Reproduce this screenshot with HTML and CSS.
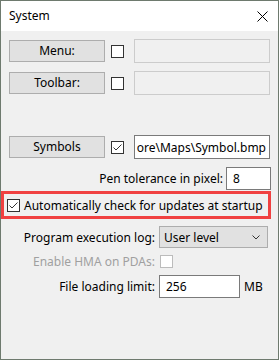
FILE: index.html
```html
<!DOCTYPE html>
<html>
<head>
<meta charset="utf-8">
<link rel="stylesheet" href="styles.css">
</head>
<body>
<div class="window">
  <div class="titlebar">
    <span class="title">System</span>
    <svg class="close" width="11" height="11" viewBox="0 0 11 11"><path d="M0.5 0.5 L10.5 10.5 M10.5 0.5 L0.5 10.5" stroke="#000" stroke-width="1"/></svg>
  </div>
  <div class="content">
    <div class="btnrow">
      <div class="btn">Menu:</div>
      <div class="cb"></div>
      <div class="field disabled"></div>
    </div>
    <div class="btnrow gap8">
      <div class="btn">Toolbar:</div>
      <div class="cb"></div>
      <div class="field disabled"></div>
    </div>
    <div class="btnrow gap40">
      <div class="btn">Symbols</div>
      <div class="cb"><svg width="11" height="11" viewBox="0 0 11 11"><path d="M1.5 5.5 L4 8 L9.5 2.5" fill="none" stroke="#333" stroke-width="1"/></svg></div>
      <div class="field path"><span>ore\Maps\Symbol.bmp</span></div>
    </div>
    <div class="penrow">
      <span class="lbl">Pen tolerance in pixel:</span>
      <div class="input pen">8</div>
    </div>
    <div class="redbox">
      <div class="cb"><svg width="11" height="11" viewBox="0 0 11 11"><path d="M1.5 5.5 L4 8 L9.5 2.5" fill="none" stroke="#333" stroke-width="1"/></svg></div>
      <span class="cbtext">Automatically check for updates at startup</span>
    </div>
    <div class="formrow prog">
      <span class="flabel">Program execution log:</span>
      <div class="select">
        <span>User level</span>
        <svg width="8" height="5" viewBox="0 0 8 5"><path d="M0.5 0.5 L4 4 L7.5 0.5" fill="none" stroke="#333" stroke-width="1"/></svg>
      </div>
    </div>
    <div class="formrow hma">
      <span class="flabel dis">Enable HMA on PDAs:</span>
      <div class="cb discb"></div>
    </div>
    <div class="formrow file">
      <span class="flabel">File loading limit:</span>
      <div class="input limit">256</div>
      <span class="unit">MB</span>
    </div>
  </div>
</div>
</body>
</html>
```
FILE: styles.css
```css
html, body {
  margin: 0;
  padding: 0;
}
body {
  font-family: "Noto Sans", "Liberation Sans", sans-serif;
  font-size: 12px;
  color: #000;
}
.window {
  width: 279px;
  height: 360px;
  box-sizing: border-box;
  border: 1px solid #6e7a6e;
  background: #f0f0f0;
  display: flex;
  flex-direction: column;
}
.titlebar {
  height: 30px;
  background: #fff;
  display: flex;
  align-items: center;
  justify-content: space-between;
  padding: 0 10px 0 8px;
}
.title {
  font-size: 12px;
  line-height: 16px;
}
.close {
  display: block;
}
.content {
  padding-top: 8px;
  display: flex;
  flex-direction: column;
}
.btnrow {
  display: flex;
  align-items: center;
  height: 24px;
  padding-left: 8px;
}
.gap8 { margin-top: 8px; }
.gap40 { margin-top: 40px; }
.btn {
  width: 96px;
  height: 22px;
  box-sizing: border-box;
  border: 1px solid #adadad;
  background: #e1e1e1;
  display: flex;
  align-items: center;
  justify-content: center;
  margin-right: 6px;
  line-height: 16px;
}
.cb {
  width: 13px;
  height: 13px;
  box-sizing: border-box;
  border: 1px solid #333;
  background: #fff;
  flex: none;
  display: flex;
  align-items: center;
  justify-content: center;
}
.cb svg { display: block; }
.field {
  margin-left: 10px;
  width: 136px;
  height: 24px;
  box-sizing: border-box;
}
.field.disabled {
  border: 1px solid #cccccc;
  background: #f0f0f0;
}
.field.path {
  border: 1px solid #7a7a7a;
  background: #fff;
  display: flex;
  align-items: center;
  justify-content: flex-end;
  overflow: hidden;
  white-space: nowrap;
  padding-right: 3px;
}
.penrow {
  margin-top: 8px;
  height: 23px;
  display: flex;
  align-items: center;
  justify-content: flex-end;
  padding-right: 7px;
}
.lbl {
  margin-right: 3px;
}
.input {
  height: 23px;
  box-sizing: border-box;
  border: 1px solid #7a7a7a;
  background: #fff;
  padding-left: 6px;
  display: flex;
  align-items: center;
}
.pen { width: 45px; }
.redbox {
  margin-top: 1px;
  width: 270px;
  height: 28px;
  box-sizing: border-box;
  border: 3px solid #f04141;
  display: flex;
  align-items: center;
  padding-left: 3px;
}
.cbtext {
  margin-left: 4px;
  white-space: nowrap;
}
.formrow {
  display: flex;
  align-items: center;
}
.flabel {
  width: 154px;
  text-align: right;
  margin-right: 4px;
  white-space: nowrap;
  flex: none;
}
.flabel.dis { color: #a0a0a0; }
.prog {
  margin-top: 7px;
  height: 22px;
}
.select {
  width: 109px;
  height: 22px;
  box-sizing: border-box;
  border: 1px solid #adadad;
  background: #e1e1e1;
  display: flex;
  align-items: center;
  justify-content: space-between;
  padding: 0 7px 0 4px;
}
.select svg { display: block; }
.hma {
  margin-top: 4px;
  height: 19px;
}
.discb {
  border-color: #bcbcbc;
  margin-left: 1px;
}
.file {
  margin-top: 4px;
  height: 23px;
}
.limit { width: 81px; }
.unit { margin-left: 4px; }
```
